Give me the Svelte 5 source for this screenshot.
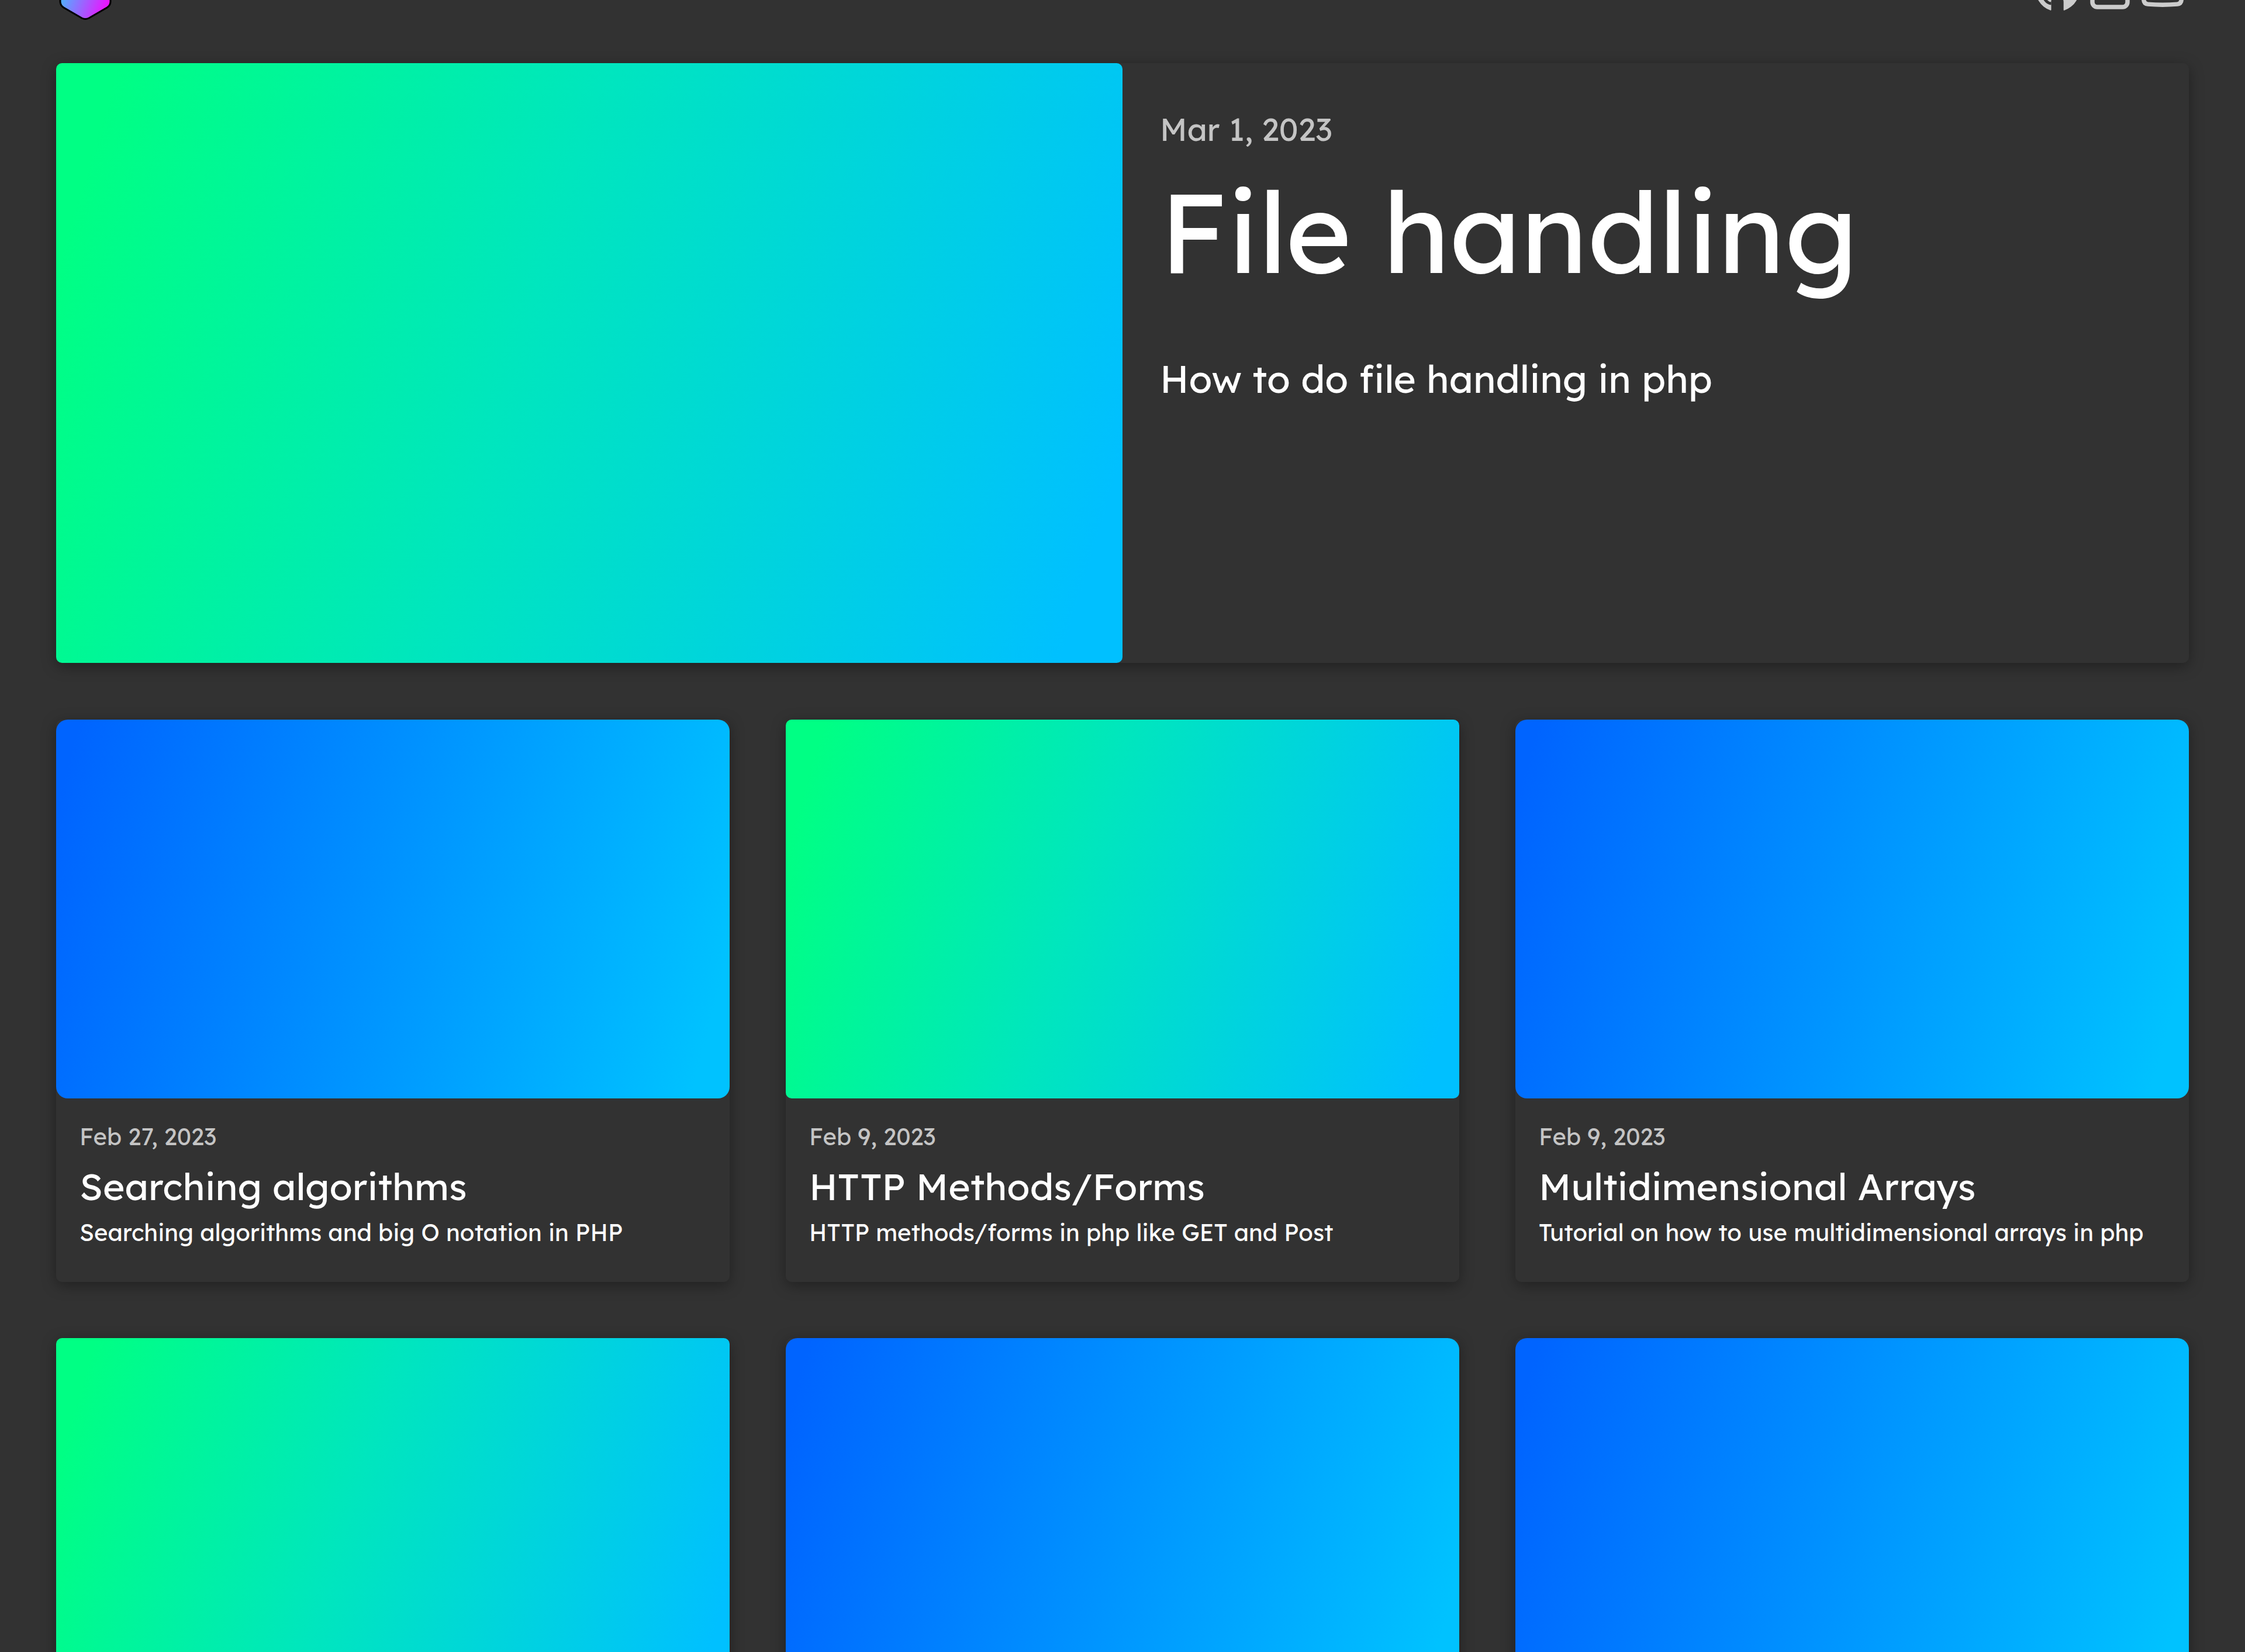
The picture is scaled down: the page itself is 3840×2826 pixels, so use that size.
<script>
  const posts = [
    { date: 'Feb 27, 2023', title: 'Searching algorithms', text: 'Searching algorithms and big O notation in PHP', tone: 'blue' },
    { date: 'Feb 9, 2023', title: 'HTTP Methods/Forms', text: 'HTTP methods/forms in php like GET and Post', tone: 'green' },
    { date: 'Feb 9, 2023', title: 'Multidimensional Arrays', text: 'Tutorial on how to use multidimensional arrays in php', tone: 'blue' },
  ];
  const covers = ['green', 'blue', 'blue'];
</script>

<div class="page">
  <header>
    <a class="logo" href="#home" aria-label="Home">
      <svg viewBox="0 0 100 106" width="100" height="106">
        <defs>
          <linearGradient id="hex" x1="0" y1="0.4" x2="1" y2="0.8">
            <stop offset="0" stop-color="#3cc4ff" />
            <stop offset="0.9" stop-color="#e619ff" />
          </linearGradient>
        </defs>
        <path d="M44 4 Q50 1 56 4 L87 22 Q93 26 93 32 L93 74 Q93 80 87 84 L56 102 Q50 105 44 102 L13 84 Q7 80 7 74 L7 32 Q7 26 13 22Z" fill="url(#hex)" stroke="#000" stroke-width="3" />
      </svg>
    </a>
    <nav>
      <a href="#github" aria-label="GitHub">
        <svg viewBox="0 0 24 24">
          <path fill="#ccc" d="M12 2a10 10 0 0 0-3.100 19.500q.25.05.25-.2V17.800q0-1.300.7-1.900C7 15.500 5.300 14 5.300 11q0-1.600 1-2.700-.4-1.200.1-2.600 1.200 0 2.800 1.100 2.800-.7 5.600 0 1.600-1.100 2.800-1.100.5 1.400.1 2.600 1 1.100 1 2.700c0 3-1.700 4.500-4.550 4.900q.7.6.7 1.900v3.500q0 .3.35.2A10 10 0 0 0 12 2z" />
          <path fill="#ccc" d="M3.200 15L6 16.300q1 2.200 3.150 2.600V21.400L7 20.500z" />
          <path fill="none" stroke="#323232" stroke-width="1.300" d="M5 15.500c1.600.2 1.500 2.800 4.150 2.900" />
        </svg>
      </a>
      <a href="#linkedin" aria-label="LinkedIn">
        <svg viewBox="0 0 24 24" fill="none" stroke="#ccc" stroke-width="2">
          <rect x="4" y="4" width="16" height="16" rx="2.200" />
          <path d="M8 11v5M12 16v-5M12 13q2-3 4 0v3" />
        </svg>
      </a>
      <a href="#youtube" aria-label="YouTube">
        <svg viewBox="0 0 24 24" fill="none" stroke="#ccc" stroke-width="2">
          <path d="M5.300 5.300q6.700-.6 13.400 0 1.800.2 1.900 2Q21 12 20.600 16.700q-.1 1.800-1.900 2-6.700.6-13.400 0-1.800-.2-1.900-2Q3 12 3.400 7.300q.1-1.800 1.900-2z" />
          <path fill="#ccc" stroke="none" d="M10 9l5 3-5 3z" />
        </svg>
      </a>
    </nav>
  </header>

  <main>
    <a class="card hero" href="#post">
      <div class="cover green"></div>
      <div class="body">
        <time>Mar 1, 2023</time>
        <h1>File handling</h1>
        <p>How to do file handling in php</p>
      </div>
    </a>
    <div class="grid">
      {#each posts as post}
        <a class="card" href="#post">
          <div class="cover {post.tone}"></div>
          <div class="body">
            <time>{post.date}</time>
            <h2>{post.title}</h2>
            <p>{post.text}</p>
          </div>
        </a>
      {/each}
      {#each covers as tone}
        <a class="card" href="#post" aria-label="Post"><div class="cover {tone}"></div></a>
      {/each}
    </div>
  </main>
</div>

<style>
  :global(body) { background: #323232; }
  .page { height: 100vh; overflow: hidden; font-family: Lexend, Inter, sans-serif; color: #fff; }
  header { display: flex; justify-content: space-between; align-items: center; height: 252px; margin-top: -144px; padding: 0 96px; box-sizing: border-box; }
  .logo svg { display: block; }
  nav { display: flex; }
  nav svg { width: 90px; height: 90px; display: block; }
  main { display: grid; gap: 97px; padding: 0 96px 96px; }
  .grid { display: grid; grid-template-columns: repeat(3, 1fr); gap: 96px; }
  .card { display: block; border-radius: 10px; color: inherit; text-decoration: none; box-shadow: 0 6px 24px rgba(0, 0, 0, 0.35); }
  .cover { aspect-ratio: 16 / 9; border-radius: 10px; }
  .green { background: linear-gradient(107deg, #00ff84 5%, #00e6be 44%, #00c0ff 95%); }
  .blue { background: linear-gradient(105deg, #0064ff 3%, #0092ff 48%, #00c2ff 95%); border-radius: 20px; }
  h1, h2, p { margin: 0; font-weight: 400; }
  time { display: block; color: #c4c4c4; }
  .body { padding: 40px 40px 60px; font-size: 40px; line-height: 50px; }
  h2 { margin: 20px 0 14px; font-size: 64px; line-height: 80px; }
  .hero { display: grid; grid-template-columns: 1fr 1fr; }
  .hero .body { padding: 79px 64px; }
  .hero time { font-size: 54px; line-height: 68px; }
  h1 { margin: 20px 0 93px; font-size: 192px; line-height: 240px; }
  .hero p { font-size: 65px; line-height: 80px; }
</style>
